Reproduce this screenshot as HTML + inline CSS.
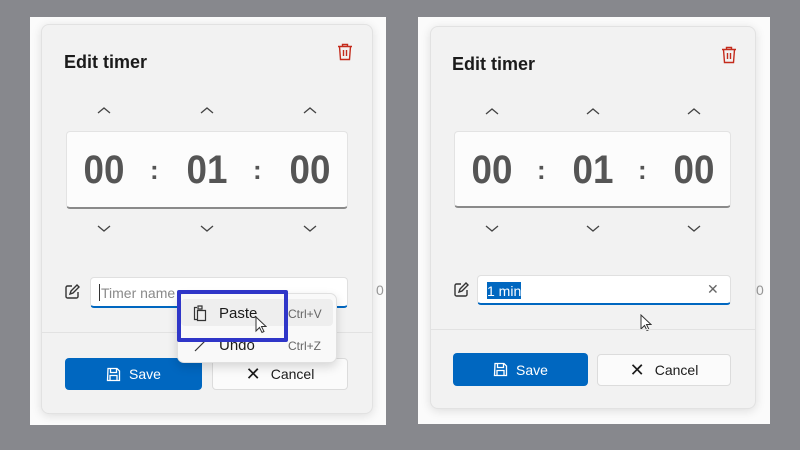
<!DOCTYPE html>
<html><head><meta charset="utf-8"><style>
*{margin:0;padding:0;box-sizing:border-box}
body{width:800px;height:450px;background:#87888d;position:relative;overflow:hidden;font-family:"Liberation Sans",sans-serif}
.a{position:absolute}
.white{background:#fbfbfb}
.dlg{background:#f2f2f2;border:1px solid #e2e2e2;border-radius:8px;box-shadow:0 2px 10px rgba(0,0,0,.12)}
.title{font-size:18px;color:#1b1b1b;font-weight:bold}
.box{background:#fcfcfc;border:1px solid #e3e3e3;border-bottom:2px solid #8a8a8a;border-radius:4px}
.dig{font-size:40px;font-weight:bold;color:#555;width:80px;text-align:center;line-height:40px;transform:scaleX(.92)}
.col{font-size:26px;font-weight:bold;color:#555;line-height:40px}
.inp{background:#fff;border:1px solid #e0e0e0;border-bottom:2px solid #0067c0;border-radius:4px}
.save{background:#0067c0;color:#fff;border-radius:4px;font-size:14px;display:flex;align-items:center;justify-content:center;gap:8px}
.cancel{background:#fbfbfb;border:1px solid #dcdcdc;border-radius:4px;font-size:14px;color:#1b1b1b;display:flex;align-items:center;justify-content:center;gap:10px}
.sep{height:1px;background:#e2e2e2}
.bg0{font-size:40px;color:#bfbfbf;overflow:hidden}
</style></head><body>
<!-- LEFT -->
<div class="a white" style="left:30px;top:17px;width:356px;height:408px"></div>
<div class="a" style="left:376px;top:282px;font-size:14px;color:#999">0</div>
<div class="a bg0" style="left:46px;top:396px;width:160px;height:18px;line-height:28px">00:05:00</div>
<div class="a dlg" style="left:41px;top:24px;width:332px;height:390px"></div>
<div class="a title" style="left:64px;top:52px">Edit timer</div>
<svg class="a" style="left:337px;top:43px" width="16" height="18" viewBox="0 0 16 18" fill="none" stroke="#c42b1c" stroke-width="1.4"><path d="M1 3.5h14M5.5 3.5V1.5h5v2M2.5 3.5l1 13h9l1-13M6.5 7v6M9.5 7v6"/></svg>
<div class="a box" style="left:66px;top:131px;width:282px;height:78px"></div>
<div class="a dig" style="left:64px;top:150px">00</div>
<div class="a col" style="left:150px;top:150px">:</div>
<div class="a dig" style="left:167px;top:150px">01</div>
<div class="a col" style="left:253px;top:150px">:</div>
<div class="a dig" style="left:270px;top:150px">00</div>
<svg class="a" style="left:64px;top:284px" width="16" height="16" fill="none" stroke="#333" stroke-width="1.4"><path d="M8 2H3.5A1.5 1.5 0 0 0 2 3.5v9A1.5 1.5 0 0 0 3.5 14h9a1.5 1.5 0 0 0 1.5-1.5V8M6 10l1-3 6-6 2 2-6 6z"/></svg>
<div class="a inp" style="left:90px;top:277px;width:258px;height:31px"></div>
<div class="a" style="left:99px;top:284px;width:1px;height:17px;background:#333"></div>
<div class="a" style="left:101px;top:285px;font-size:14px;color:#8a8a8a">Timer name</div>
<div class="a sep" style="left:42px;top:332px;width:330px"></div>
<div class="a save" style="left:65px;top:358px;width:137px;height:32px"><svg width="15" height="15" fill="none" stroke="#fff" stroke-width="1.3"><path d="M2 1.5h9l2.5 2.5v9.5h-12zM4.5 1.5v4h6v-4M4 13.5v-5h7v5"/></svg>Save</div>
<div class="a cancel" style="left:212px;top:358px;width:136px;height:32px"><span style="font-size:18px">✕</span>Cancel</div>
<!-- context menu -->
<div class="a" style="left:177px;top:293px;width:160px;height:70px;background:#f9f9f9;border:1px solid #e0e0e0;border-radius:7px;box-shadow:0 4px 10px rgba(0,0,0,.15)"></div>
<div class="a" style="left:181px;top:299px;width:152px;height:27px;background:#eeeeee;border-radius:4px"></div>
<svg class="a" style="left:193px;top:305px" width="14" height="17" fill="none" stroke="#333" stroke-width="1.2"><path d="M4 2.5H1.5v12h3M5 1h4v3H5zM4.5 5.5h8v10h-8z"/></svg>
<div class="a" style="left:219px;top:305px;font-size:15px;color:#1b1b1b">Paste</div>
<div class="a" style="left:288px;top:307px;font-size:12px;color:#666">Ctrl+V</div>
<svg class="a" style="left:193px;top:337px" width="16" height="16" fill="none" stroke="#333" stroke-width="1.2"><path d="M2 14l10-10"/></svg>
<div class="a" style="left:219px;top:337px;font-size:15px;color:#1b1b1b">Undo</div>
<div class="a" style="left:288px;top:339px;font-size:12px;color:#666">Ctrl+Z</div>
<div class="a" style="left:177px;top:290px;width:111px;height:52px;border:4px solid #2f36c8;border-radius:2px"></div>
<svg class="a" style="left:255px;top:316px" width="12" height="18"><path d="M1 1v14l3.5-3.5 2.5 5 2-1-2.5-5H11z" fill="#fff" stroke="#333" stroke-width="1"/></svg>
<!-- RIGHT -->
<div class="a white" style="left:418px;top:17px;width:352px;height:407px"></div>
<div class="a" style="left:756px;top:282px;font-size:14px;color:#999">0</div>
<div class="a bg0" style="left:436px;top:395px;width:160px;height:14px;line-height:26px">00:05:00</div>
<div class="a dlg" style="left:430px;top:26px;width:326px;height:383px"></div>
<div class="a title" style="left:452px;top:54px">Edit timer</div>
<svg class="a" style="left:721px;top:46px" width="16" height="18" viewBox="0 0 16 18" fill="none" stroke="#c42b1c" stroke-width="1.4"><path d="M1 3.5h14M5.5 3.5V1.5h5v2M2.5 3.5l1 13h9l1-13M6.5 7v6M9.5 7v6"/></svg>
<div class="a box" style="left:454px;top:131px;width:277px;height:77px"></div>
<div class="a dig" style="left:452px;top:150px">00</div>
<div class="a col" style="left:537px;top:150px">:</div>
<div class="a dig" style="left:553px;top:150px">01</div>
<div class="a col" style="left:638px;top:150px">:</div>
<div class="a dig" style="left:654px;top:150px">00</div>
<svg class="a" style="left:453px;top:282px" width="16" height="16" fill="none" stroke="#333" stroke-width="1.4"><path d="M8 2H3.5A1.5 1.5 0 0 0 2 3.5v9A1.5 1.5 0 0 0 3.5 14h9a1.5 1.5 0 0 0 1.5-1.5V8M6 10l1-3 6-6 2 2-6 6z"/></svg>
<div class="a inp" style="left:477px;top:275px;width:254px;height:30px"></div>
<div class="a" style="left:487px;top:282px;width:34px;height:17px;background:#0067c0"></div>
<div class="a" style="left:487px;top:283px;font-size:14px;color:#fff">1 min</div>
<div class="a" style="left:707px;top:281px;font-size:14px;color:#666">✕</div>
<svg class="a" style="left:640px;top:314px" width="12" height="18"><path d="M1 1v14l3.5-3.5 2.5 5 2-1-2.5-5H11z" fill="#fff" stroke="#333" stroke-width="1"/></svg>
<div class="a sep" style="left:431px;top:329px;width:324px"></div>
<div class="a save" style="left:453px;top:353px;width:135px;height:33px"><svg width="15" height="15" fill="none" stroke="#fff" stroke-width="1.3"><path d="M2 1.5h9l2.5 2.5v9.5h-12zM4.5 1.5v4h6v-4M4 13.5v-5h7v5"/></svg>Save</div>
<div class="a cancel" style="left:597px;top:354px;width:134px;height:32px"><span style="font-size:18px">✕</span>Cancel</div>
<svg class="a" style="left:0;top:0" width="800" height="450" fill="none" stroke="#444" stroke-width="1.3">
<path d="M98 113l6-5 6 5M201 113l6-5 6 5M304 113l6-5 6 5"/>
<path d="M98 226l6 5 6-5M201 226l6 5 6-5M304 226l6 5 6-5"/>
<path d="M486 114l6-5 6 5M587 114l6-5 6 5M688 114l6-5 6 5"/>
<path d="M486 226l6 5 6-5M587 226l6 5 6-5M688 226l6 5 6-5"/>
</svg>
</body></html>
